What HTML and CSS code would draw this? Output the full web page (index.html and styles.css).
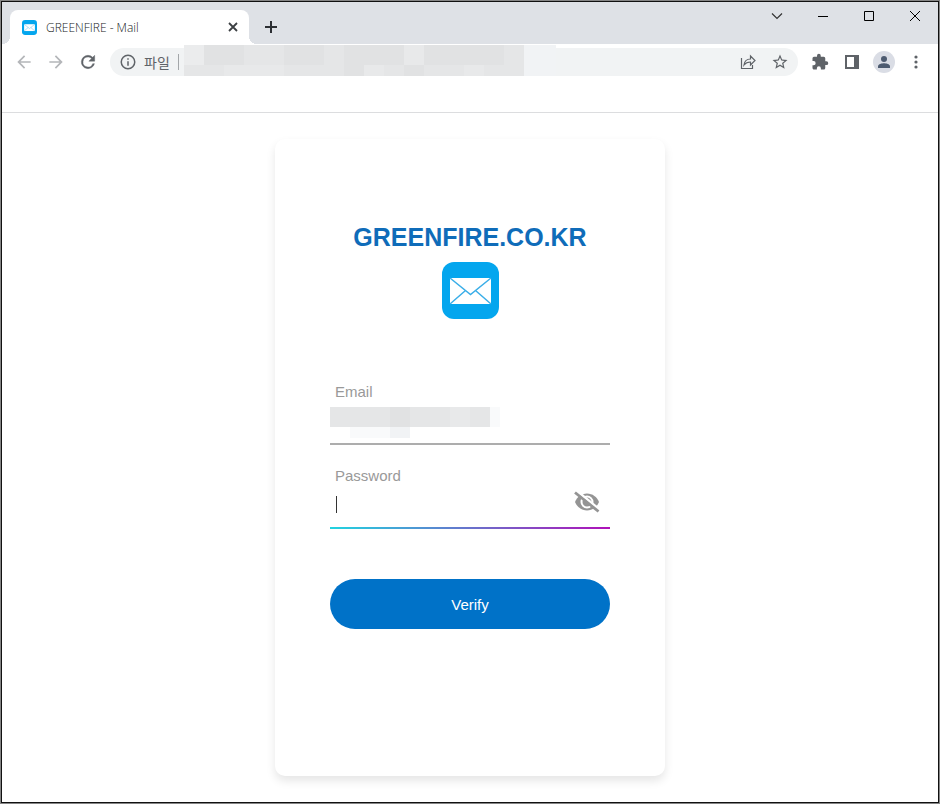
FILE: index.html
```html
<!DOCTYPE html>
<html lang="ko">
<head>
<meta charset="utf-8">
<meta name="viewport" content="width=device-width, initial-scale=1">
<title>GREENFIRE - Mail</title>
<link rel="stylesheet" href="styles.css">
</head>
<body>
<svg class="symbols" aria-hidden="true">
  <symbol id="mail" viewBox="0 0 57 57">
    <rect width="57" height="57" rx="12" fill="#04a6ee"/>
    <rect x="8" y="16" width="41" height="26" fill="#fff"/>
    <path d="M8 16l20.500 16.500L49 16M8 42l15.500-13.500M49 42L33.500 28.500" fill="none" stroke="#3aaee8" stroke-width="1.500"/>
  </symbol>
</svg>
<div class="window">
  <header class="tabstrip">
    <div class="tab">
      <svg class="favicon" aria-hidden="true"><use href="#mail"/></svg>
      <span class="tab-title">GREENFIRE - Mail</span>
      <button class="tab-close" aria-label="Close tab"><svg width="10" height="10" viewBox="0 0 10 10"><path d="M1 1l8 8M9 1L1 9" stroke="#3c4043" stroke-width="1.800"/></svg></button>
    </div>
    <button class="new-tab" aria-label="New tab"><svg width="12" height="12" viewBox="0 0 12 12"><path d="M6 0v12M0 6h12" stroke="#2c2f33" stroke-width="2"/></svg></button>
    <div class="caption">
      <button aria-label="Search tabs"><svg width="12" height="12" viewBox="0 0 12 12"><path d="M1 3.500l5 5 5-5" stroke="#333" fill="none" stroke-width="1.200"/></svg></button>
      <button aria-label="Minimize"><svg width="10" height="10" viewBox="0 0 10 10"><path d="M0 5.500h10" stroke="#000"/></svg></button>
      <button aria-label="Maximize"><svg width="10" height="10" viewBox="0 0 10 10"><path d="M.5.500h9v9h-9z" stroke="#000" fill="none"/></svg></button>
      <button aria-label="Close"><svg width="10" height="10" viewBox="0 0 10 10"><path d="M0 0l10 10M10 0L0 10" stroke="#000"/></svg></button>
    </div>
  </header>
  <nav class="toolbar">
    <button class="tool faded" aria-label="Back"><svg width="20" height="20" viewBox="0 0 24 24"><path d="M20 11H7.830l5.590-5.590L12 4l-8 8 8 8 1.410-1.410L7.830 13H20z"/></svg></button>
    <button class="tool faded" aria-label="Forward"><svg width="20" height="20" viewBox="0 0 24 24"><path d="M4 11h12.170l-5.590-5.590L12 4l8 8-8 8-1.410-1.410L16.170 13H4z"/></svg></button>
    <button class="tool" aria-label="Reload"><svg width="20" height="20" viewBox="0 0 24 24"><path d="M17.650 6.350A7.960 7.960 0 0 0 12 4a8 8 0 1 0 7.730 10h-2.080A6 6 0 1 1 12 6c1.660 0 3.140.690 4.220 1.780L13 11h7V4z" stroke="#5f6368" stroke-width=".5"/></svg></button>
    <div class="address">
      <svg class="info" width="18" height="18" viewBox="0 0 24 24"><path d="M11 7h2v2h-2zm0 4h2v6h-2zm1-9a10 10 0 1 0 0 20 10 10 0 0 0 0-20zm0 18a8 8 0 1 1 0-16 8 8 0 0 1 0 16z"/></svg>
      <span class="scheme">파일</span>
      <span class="divider"></span>
      <div class="redacted url" aria-hidden="true">
        <i class="s2"></i><i class="s5"></i><i class="s5"></i><i class="s4"></i><i class="s4"></i><i class="s5"></i><i class="s5"></i><i class="s4"></i><i class="s5"></i><i class="s5"></i><i class="s5"></i><i class="s3"></i><i class="s5"></i><i class="s5"></i><i class="s5"></i><i class="s5"></i><i class="s4"></i><i class="s1"></i>
        <i class="s4"></i><i class="s4"></i><i class="s3"></i><i class="s3"></i><i class="s3"></i><i class="s4"></i><i class="s4"></i><i class="s4"></i><i class="s5"></i><i class="s3"></i><i class="s4"></i><i class="s5"></i><i class="s4"></i><i class="s4"></i><i class="s3"></i><i class="s4"></i><i class="s4"></i><i class="s1"></i>
      </div>
      <div class="address-actions">
        <button class="tool" aria-label="Share"><svg width="16" height="16" viewBox="0 0 16 16"><path d="M1.500 4v10.500h11V11M4 11c.5-4 3-6 6.500-6V2L15 6.500 10.500 11V8C7.500 8 5.500 9 4 11z" fill="none" stroke="#5f6368" stroke-width="1.200"/></svg></button>
        <button class="tool" aria-label="Bookmark"><svg width="18" height="18" viewBox="0 0 24 24"><path d="M22 9.240l-7.190-.62L12 2 9.190 8.630 2 9.240l5.460 4.730L5.820 21 12 17.270 18.180 21l-1.630-7.030zM12 15.400l-3.760 2.270 1-4.280-3.320-2.880 4.380-.38L12 6.100l1.710 4.040 4.380.38-3.320 2.880 1 4.280z"/></svg></button>
      </div>
    </div>
    <button class="tool" aria-label="Extensions"><svg width="18" height="18" viewBox="0 0 24 24"><path d="M20.500 11H19V7a2 2 0 0 0-2-2h-4V3.500a2.500 2.500 0 0 0-5 0V5H4a2 2 0 0 0-2 2v3.800h1.500a2.700 2.700 0 0 1 0 5.400H2V20c0 1.100.9 2 2 2h3.800v-1.500a2.700 2.700 0 0 1 5.400 0V22H17a2 2 0 0 0 2-2v-4h1.500a2.500 2.500 0 0 0 0-5z"/></svg></button>
    <button class="tool" aria-label="Side panel"><svg width="14" height="14" viewBox="0 0 14 14"><path d="M0 0h14v14H0zM2 2v10h7V2z" fill-rule="evenodd"/></svg></button>
    <button class="tool" aria-label="Profile"><svg width="22" height="22" viewBox="0 0 22 22"><circle cx="11" cy="11" r="11" fill="#dadde5"/><circle cx="11" cy="8" r="3" fill="#4d5b70"/><path d="M5 17v-1.500C5 13 9 12.300 11 12.300s6 .7 6 3.200V17z" fill="#4d5b70"/></svg></button>
    <button class="tool" aria-label="Menu"><svg width="4" height="14" viewBox="0 0 4 14"><circle cx="2" cy="2" r="1.600"/><circle cx="2" cy="7" r="1.600"/><circle cx="2" cy="12" r="1.600"/></svg></button>
  </nav>
  <main class="page">
    <form class="card">
      <h1>GREENFIRE.CO.KR</h1>
      <svg class="logo" role="img" aria-label="Mail"><use href="#mail"/></svg>
      <div class="field">
        <label for="email">Email</label>
        <div class="control">
          <input id="email" type="email">
          <div class="redacted mail" aria-hidden="true">
            <i class="s4"></i><i class="s4"></i><i class="s4"></i><i class="s5"></i><i class="s4"></i><i class="s4"></i><i class="s3"></i><i class="s4"></i><i class="s0"></i>
            <i></i><i class="s0"></i><i class="s0"></i><i class="s1"></i>
          </div>
        </div>
      </div>
      <div class="field active">
        <label for="password">Password</label>
        <div class="control">
          <input id="password" type="password">
          <span class="caret"></span>
          <button type="button" class="reveal" aria-label="Show password"><svg width="26" height="22" viewBox="0 0 26 22"><path d="M1 11C3 6 7.500 2.500 13 2.500S23 6 25 11c-2 5-6.500 8.500-12 8.500S3 16 1 11z" fill="#949494"/><circle cx="13" cy="11" r="5.500" fill="none" stroke="#fff" stroke-width="2"/><path d="M3 0l23 19" stroke="#fff" stroke-width="2.600"/><path d="M1 1.500l23.500 19" stroke="#949494" stroke-width="2.800"/></svg></button>
        </div>
      </div>
      <button type="button" class="verify">Verify</button>
    </form>
  </main>
</div>
</body>
</html>
```
FILE: styles.css
```css
* { box-sizing: border-box; }

body {
  margin: 0;
  min-height: 100vh;
  display: flex;
  border: 1px solid #858585;
  background: #fff;
  font-family: "Liberation Sans", Arial, sans-serif;
}

button {
  padding: 0;
  border: 0;
  background: none;
  font: inherit;
  display: flex;
  align-items: center;
  justify-content: center;
}

.symbols { display: none; }

.window {
  flex: 1;
  min-width: 0;
  border: 1px solid #111;
}

/* Tab strip */
.tabstrip {
  display: flex;
  align-items: flex-end;
  height: 42px;
  padding-left: 8px;
  background: #dee1e6;
}

.tab {
  position: relative;
  display: flex;
  align-items: center;
  width: 239px;
  height: 34px;
  padding: 0 8px 0 12px;
  border-radius: 8px 8px 0 0;
  background: #fff;
}

.tab::before,
.tab::after {
  content: "";
  position: absolute;
  bottom: 0;
  width: 8px;
  height: 8px;
}

.tab::before {
  right: 100%;
  background: radial-gradient(circle at 0 0, #dee1e6 8px, #fff 8px);
}

.tab::after {
  left: 100%;
  background: radial-gradient(circle at 100% 0, #dee1e6 8px, #fff 8px);
}

.favicon { width: 15px; height: 15px; }

.tab-title {
  flex: 1;
  margin-left: 9px;
  color: #202124;
  font: 300 12px "Open Sans", sans-serif;
}

.tab-close { width: 16px; height: 16px; }
.new-tab { width: 28px; height: 34px; margin-left: 8px; }

.caption {
  display: flex;
  align-self: flex-start;
  margin-left: auto;
}

.caption button { width: 46px; height: 28px; }

/* Toolbar */
.toolbar {
  display: flex;
  align-items: flex-start;
  height: 69px;
  padding: 4px 6px 0;
  border-bottom: 1px solid #dcdddf;
}

.tool {
  width: 32px;
  height: 28px;
  fill: #5f6368;
}

.faded { fill: #b4b6b9; }

.address {
  flex: 1;
  display: flex;
  align-items: center;
  height: 28px;
  margin: 0 6px;
  padding-left: 9px;
  border-radius: 14px;
  background: #f1f3f4;
}

.info { fill: #5f6368; }

.scheme {
  margin-left: 7px;
  color: #5f6368;
  font: 14px "Noto Sans CJK KR", sans-serif;
}

.divider {
  width: 1px;
  height: 16px;
  margin: 0 5px 0 8px;
  background: #a3a6a9;
}

.address-actions { display: flex; margin-left: auto; padding-right: 2px; }

/* Pixelated blocks */
.redacted { display: grid; }
.s0 { background: #f9fafb; }
.s1 { background: #f1f3f5; }
.s2 { background: #ebeced; }
.s3 { background: #e8e9ea; }
.s4 { background: #e5e6e7; }
.s5 { background: #e1e2e3; }

.url {
  align-self: flex-end;
  grid-template-columns: repeat(17, 20px) 32px;
  grid-template-rows: 20px 11px;
}

.mail {
  position: absolute;
  left: 0;
  top: 5px;
  grid-template-columns: repeat(8, 20px) 10px;
  grid-template-rows: 20px 11px;
}

/* Page */
.page {
  display: flex;
  justify-content: center;
  padding: 26px 16px;
}

.card {
  display: flex;
  flex-direction: column;
  width: 100%;
  max-width: 390px;
  padding: 83px 55px 147px;
  border-radius: 10px;
  background: #fff;
  box-shadow: 0 5px 10px rgba(0, 0, 0, 0.1);
}

h1 {
  margin: 0;
  color: #0f6cb9;
  font-size: 25px;
  line-height: 30px;
  text-align: center;
}

.logo {
  align-self: center;
  width: 57px;
  height: 57px;
  margin: 10px 0 63px;
}

.field {
  border-bottom: 2px solid #adadad;
}

.field + .field { margin-top: 21px; }

.active {
  border-image: linear-gradient(90deg, #21d4e0, #b010b8) 1;
}

.field label {
  display: block;
  padding-left: 5px;
  color: #999;
  font-size: 15px;
  line-height: 20px;
}

.control { position: relative; height: 41px; }

.control input {
  width: 100%;
  height: 100%;
  padding: 0 40px 0 5px;
  border: 0;
  outline: 0;
  background: none;
  color: #555;
  font: 15px "Liberation Sans", Arial, sans-serif;
}

.caret {
  position: absolute;
  left: 6px;
  top: 10px;
  width: 1px;
  height: 17px;
  background: #333;
}

.reveal {
  position: absolute;
  right: 10px;
  top: 5px;
}

.verify {
  height: 50px;
  margin-top: 50px;
  border-radius: 25px;
  background: #0072c8;
  color: #fff;
  font-size: 15px;
}
```
